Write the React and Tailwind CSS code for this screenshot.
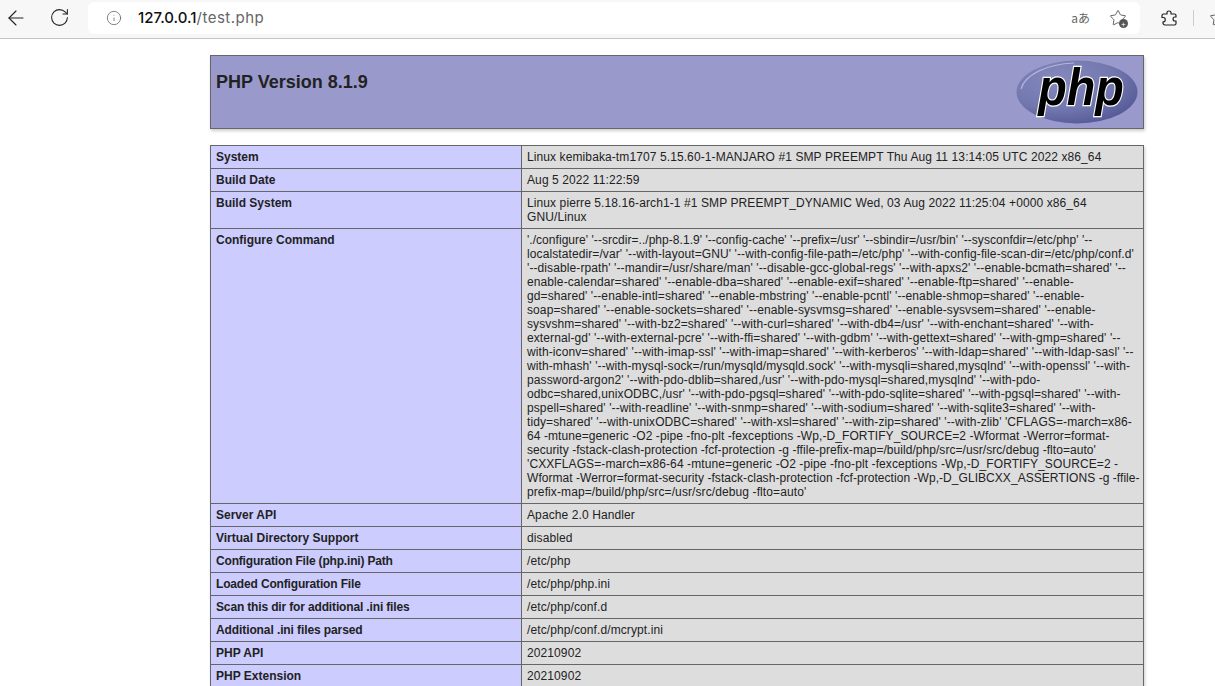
import { ArrowLeft, Info, RotateCw, Star } from "lucide-react";

// wrap points taken from the reference, the local font metrics break lines elsewhere
const configure = [
  ["'./configure' '--srcdir=../php-8.1.9' '--config-cache' '--prefix=/usr' '--sbindir=/usr/bin' '--sysconfdir=/etc/php' '--", "tracking-[0.04px]"],
  ["localstatedir=/var' '--with-layout=GNU' '--with-config-file-path=/etc/php' '--with-config-file-scan-dir=/etc/php/conf.d'"],
  ["'--disable-rpath' '--mandir=/usr/share/man' '--disable-gcc-global-regs' '--with-apxs2' '--enable-bcmath=shared' '--"],
  ["enable-calendar=shared' '--enable-dba=shared' '--enable-exif=shared' '--enable-ftp=shared' '--enable-"],
  ["gd=shared' '--enable-intl=shared' '--enable-mbstring' '--enable-pcntl' '--enable-shmop=shared' '--enable-"],
  ["soap=shared' '--enable-sockets=shared' '--enable-sysvmsg=shared' '--enable-sysvsem=shared' '--enable-"],
  ["sysvshm=shared' '--with-bz2=shared' '--with-curl=shared' '--with-db4=/usr' '--with-enchant=shared' '--with-"],
  ["external-gd' '--with-external-pcre' '--with-ffi=shared' '--with-gdbm' '--with-gettext=shared' '--with-gmp=shared' '--"],
  ["with-iconv=shared' '--with-imap-ssl' '--with-imap=shared' '--with-kerberos' '--with-ldap=shared' '--with-ldap-sasl' '--"],
  ["with-mhash' '--with-mysql-sock=/run/mysqld/mysqld.sock' '--with-mysqli=shared,mysqlnd' '--with-openssl' '--with-"],
  ["password-argon2' '--with-pdo-dblib=shared,/usr' '--with-pdo-mysql=shared,mysqlnd' '--with-pdo-"],
  ["odbc=shared,unixODBC,/usr' '--with-pdo-pgsql=shared' '--with-pdo-sqlite=shared' '--with-pgsql=shared' '--with-"],
  ["pspell=shared' '--with-readline' '--with-snmp=shared' '--with-sodium=shared' '--with-sqlite3=shared' '--with-"],
  ["tidy=shared' '--with-unixODBC=shared' '--with-xsl=shared' '--with-zip=shared' '--with-zlib' 'CFLAGS=-march=x86-"],
  ["64 -mtune=generic -O2 -pipe -fno-plt -fexceptions -Wp,-D_FORTIFY_SOURCE=2 -Wformat -Werror=format-", "tracking-[0.08px]"],
  ["security -fstack-clash-protection -fcf-protection -g -ffile-prefix-map=/build/php/src=/usr/src/debug -flto=auto'", "tracking-[0.05px]"],
  ["'CXXFLAGS=-march=x86-64 -mtune=generic -O2 -pipe -fno-plt -fexceptions -Wp,-D_FORTIFY_SOURCE=2 -"],
  ["Wformat -Werror=format-security -fstack-clash-protection -fcf-protection -Wp,-D_GLIBCXX_ASSERTIONS -g -ffile-", "tracking-[0.05px]"],
  ["prefix-map=/build/php/src=/usr/src/debug -flto=auto'"],
];

const rows = [
  ["System", "Linux kemibaka-tm1707 5.15.60-1-MANJARO #1 SMP PREEMPT Thu Aug 11 13:14:05 UTC 2022 x86_64"],
  ["Build Date", "Aug 5 2022 11:22:59"],
  ["Build System", "Linux pierre 5.18.16-arch1-1 #1 SMP PREEMPT_DYNAMIC Wed, 03 Aug 2022 11:25:04 +0000 x86_64 GNU/Linux"],
  ["Configure Command", configure],
  ["Server API", "Apache 2.0 Handler"],
  ["Virtual Directory Support", "disabled"],
  ["Configuration File (php.ini) Path", "/etc/php", "tracking-[-0.18px]"],
  ["Loaded Configuration File", "/etc/php/php.ini", "tracking-[-0.16px]"],
  ["Scan this dir for additional .ini files", "/etc/php/conf.d", "tracking-[-0.15px]"],
  ["Additional .ini files parsed", "/etc/php/conf.d/mcrypt.ini", "tracking-[-0.1px]"],
  ["PHP API", "20210902"],
  ["PHP Extension", "20210902"],
];

const PhpLogo = () => (
  <svg width="122" height="64" viewBox="0 0 122 64" className="float-right overflow-visible">
    <defs>
      <radialGradient id="oval" cx="35%" cy="30%" r="85%">
        <stop offset="0%" stopColor="#8589bd" />
        <stop offset="55%" stopColor="#7277ae" />
        <stop offset="100%" stopColor="#4c5090" />
      </radialGradient>
    </defs>
    <ellipse cx="61" cy="32" rx="60.5" ry="31.5" fill="url(#oval)" />
    <path d="M5 29C9 15 30 4 58 3" fill="none" stroke="#b3b6d8" strokeWidth="1.2" />
    <text
      transform="translate(65 45) scale(0.9 1)"
      textAnchor="middle"
      fontFamily="'Liberation Sans', sans-serif"
      fontSize="52"
      fontWeight="700"
      fontStyle="italic"
      fill="#000"
      stroke="#fff"
      strokeWidth="2.4"
      paintOrder="stroke"
    >
      php
    </text>
  </svg>
);

const BrowserBar = () => (
  <div className="flex h-[39px] items-center border-b border-[#c4c4c4] bg-[#f7f7f7] font-['Inter',sans-serif]">
    <ArrowLeft size={24} strokeWidth={1.1} className="mb-[3px] ml-[4px] shrink-0 text-[#222]" />
    <RotateCw size={21} strokeWidth={1.2} className="mb-[3px] ml-[21px] shrink-0 text-[#222]" />
    <div className="mb-[2px] ml-[18px] flex h-[32px] w-[1052px] shrink-0 items-center rounded-md bg-white">
      <Info size={16} strokeWidth={1.2} className="ml-[18px] mb-px text-[#666]" />
      <span className="ml-[16px] text-[15px] font-medium text-[#111]">127.0.0.1</span>
      <span className="text-[15px] tracking-[0.5px] text-[#666]">/test.php</span>
      <span className="ml-auto font-['Noto_Sans_CJK_JP','Noto_Sans',sans-serif] text-[12px] text-[#666]">aあ</span>
      <div className="relative ml-[19px] mr-[13px] text-[#444]">
        <Star size={18} strokeWidth={1.1} />
        <span className="absolute -bottom-[1px] -right-[1px] flex h-[9px] w-[9px] items-center justify-center rounded-full bg-[#555] text-[8px] leading-none text-white">+</span>
      </div>
    </div>
    <svg width="18" height="18" viewBox="0 0 18 18" fill="none" stroke="#222" strokeWidth="1.2" className="mb-[2px] ml-[20px] shrink-0">
      <path d="M7 3.5C7 1.5 11 1.5 11 3.5V5H14.5C15.3 5 16 5.7 16 6.5V8H14.8C12.5 8 12.5 12 14.8 12H16V14.5C16 15.3 15.3 16 14.5 16H5C3.9 16 3 15.1 3 14V12.8H3.5C5.8 12.8 5.8 8.5 3.5 8.5H2V6.5C2 5.7 2.7 5 3.5 5H7Z" strokeLinejoin="round" />
    </svg>
    <div className="mb-[3px] ml-[15px] h-[16px] w-px shrink-0 bg-[#ccc]" />
    <Star size={18} strokeWidth={1.1} className="mb-[3px] ml-[15px] shrink-0 text-[#444]" />
  </div>
);

export default function App() {
  return (
    <div className="h-screen overflow-hidden bg-white font-['Liberation_Sans',Arial,sans-serif] text-[#222]">
      <BrowserBar />
      <div className="ml-[210px] mt-[16px] h-[74px] w-[934px] border border-[#666] bg-[#99c] px-[5px] pt-[4px] shadow-[1px_2px_3px_rgba(0,0,0,0.2)]">
        <PhpLogo />
        <h1 className="mt-[12px] text-[18px] font-bold leading-[21px]">PHP Version 8.1.9</h1>
      </div>
      <table className="ml-[210px] mt-[16px] w-[934px] table-fixed border-collapse text-[12px] leading-[14px] shadow-[1px_2px_3px_rgba(0,0,0,0.2)]">
        <tbody>
          {rows.map(([label, value, labelFit]) => (
            <tr key={label}>
              <td className={`w-[311px] border border-[#666] bg-[#ccf] px-[5px] py-[4px] align-baseline font-bold ${labelFit ?? ""}`}>{label}</td>
              <td className="border border-[#666] bg-[#ddd] px-[5px] py-[4px] align-baseline tracking-[0.1px]">
                {Array.isArray(value)
                  ? value.map(([line, lineFit]) => (
                      <div key={line} className={`whitespace-nowrap ${lineFit ?? ""}`}>
                        {line}
                      </div>
                    ))
                  : value}
              </td>
            </tr>
          ))}
        </tbody>
      </table>
    </div>
  );
}
